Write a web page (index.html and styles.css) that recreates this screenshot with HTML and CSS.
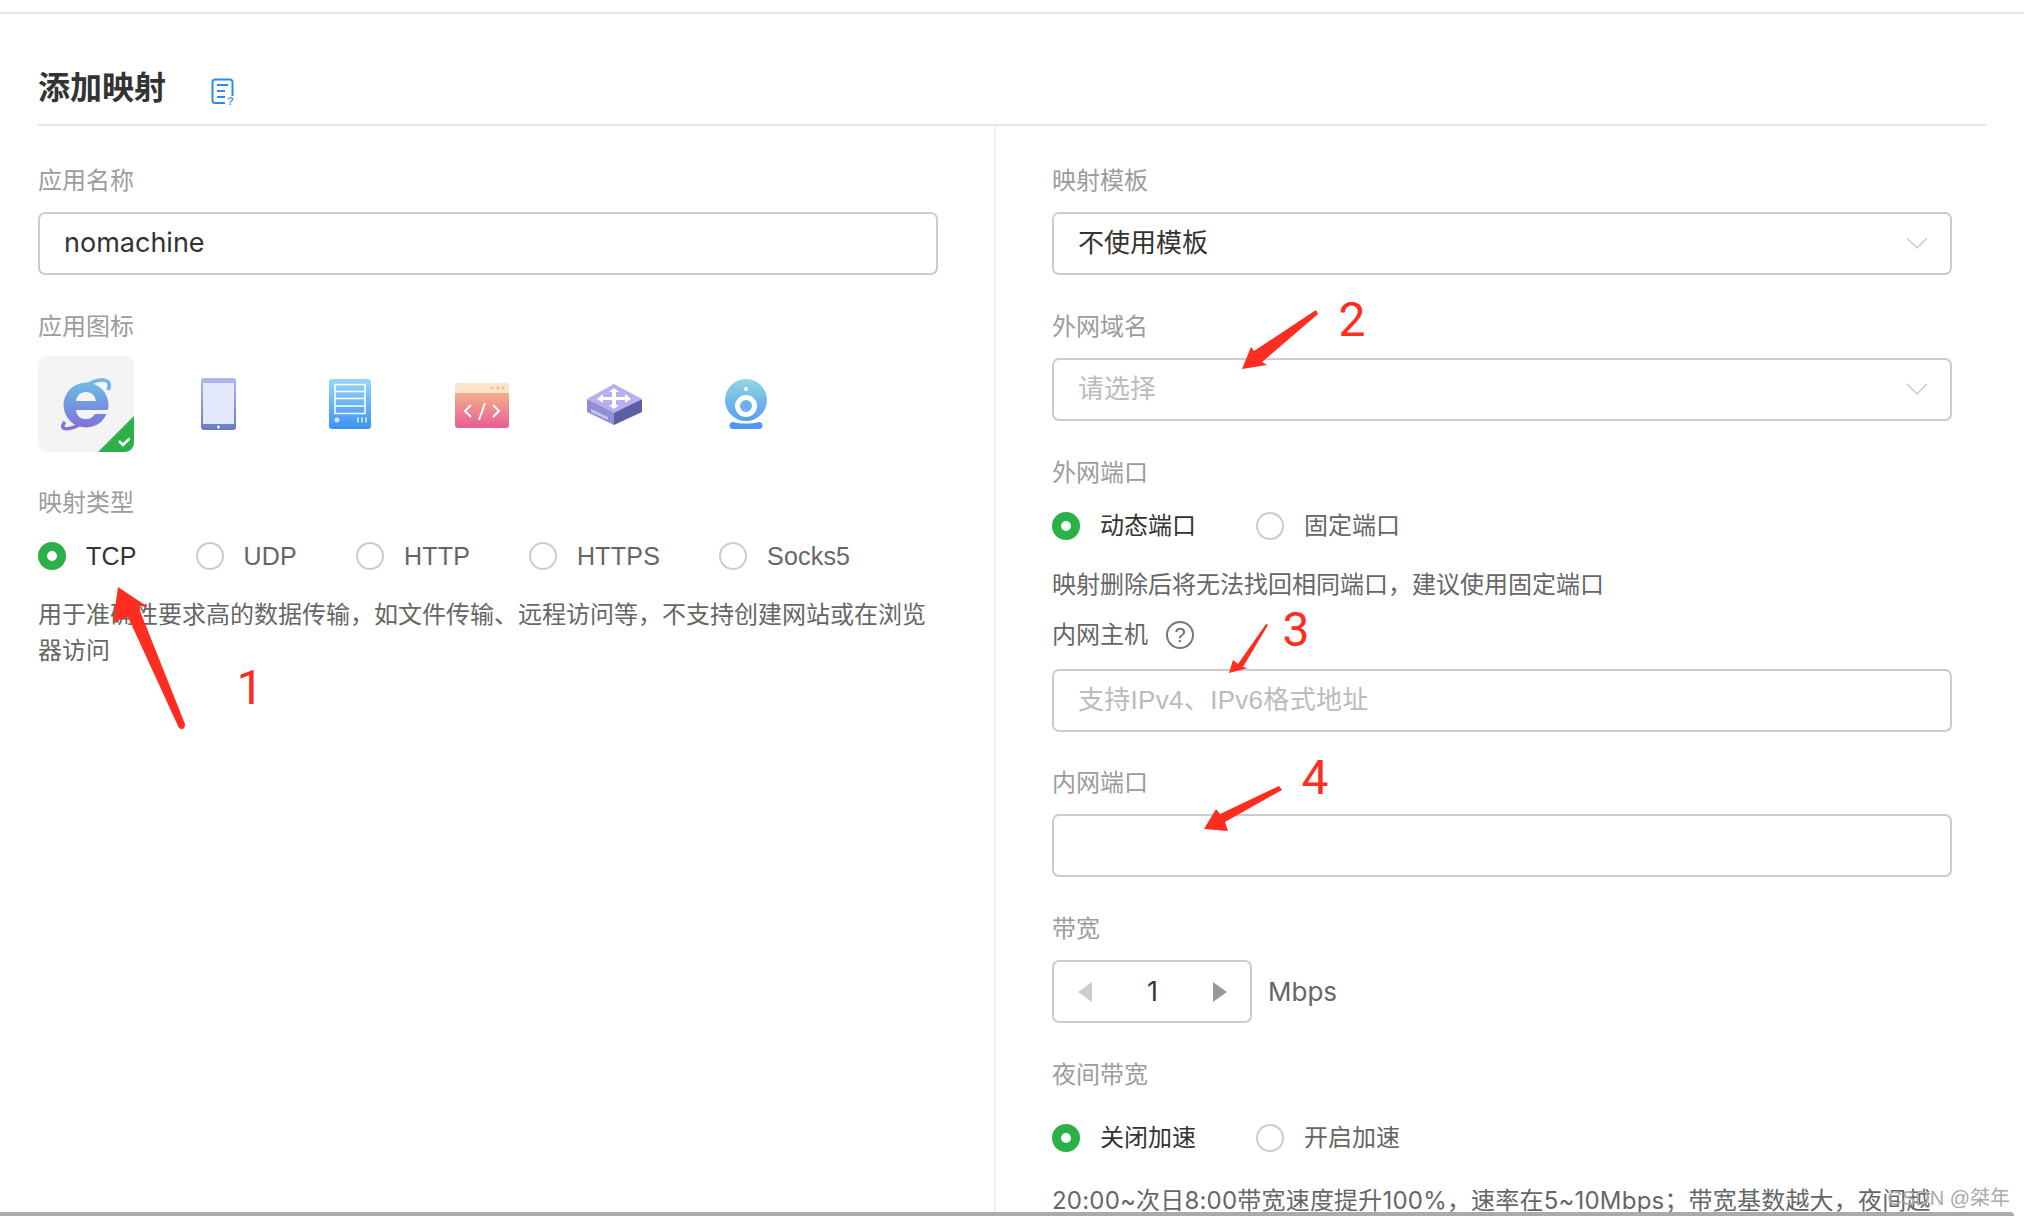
FILE: index.html
```html
<!DOCTYPE html>
<html lang="zh-CN">
<head>
    <meta charset="UTF-8">
    <title>添加映射</title>
    <link rel="stylesheet" href="styles.css">
</head>
<body>
<div id="wrapper">
    <div class="topline"></div>
    <div class="page-head">
        <h1>添加映射</h1>
        <svg class="doc-icon" width="24" height="28" viewBox="0 0 24 28">
            <path d="M14 25H4a2.500 2.500 0 0 1-2.500-2.500V4A2.500 2.500 0 0 1 4 1.500h15A2.500 2.500 0 0 1 21.500 4v14" fill="none" stroke="#2d8ae6" stroke-width="2"/>
            <path d="M6 7h11M6 13h8M6 19h8" fill="none" stroke="#2d8ae6" stroke-width="2"/>
            <text x="16" y="27" class="doc-mark">?</text>
        </svg>
    </div>
    <div class="columns">
        <div class="col col-left">
            <div class="field">
                <label>应用名称</label>
                <div class="control latin">nomachine</div>
            </div>
            <div class="field">
                <label>应用图标</label>
                <div class="icon-row">
                    <div class="icon-cell selected">
                        <svg width="96" height="96" viewBox="0 0 96 96">
                            <defs>
                                <linearGradient id="ie" x1="0" y1="0" x2="0" y2="1">
                                    <stop offset="0" stop-color="#6cbbe6"/>
                                    <stop offset="1" stop-color="#7f72d8"/>
                                </linearGradient>
                            </defs>
                            <path d="M27 66C20 74 30 75 43 68M45 32C60 20 76 22 70 34" fill="none" stroke="url(#ie)" stroke-width="3.500"/>
                            <circle cx="48" cy="49" r="22.500" fill="url(#ie)"/>
                            <path d="M38 45c1-6 5-9 10-9s9 3 10 9z" fill="#f4f4f4"/>
                            <path d="M38 54c1 7 5 9 10 9 4 0 7-2 9-5h14v-4z" fill="#f4f4f4"/>
                            <path d="M60 96 96 60v36z" fill="#2cb04a"/>
                            <path d="M81 85l4 4 6.500-6.500" fill="none" stroke="#fff" stroke-width="2.500"/>
                        </svg>
                    </div>
                    <div class="icon-cell">
                        <svg width="35" height="52" viewBox="0 0 35 52">
                            <defs>
                                <linearGradient id="tablet" x1="0" y1="0" x2="0" y2="1">
                                    <stop offset="0" stop-color="#aeb8ec"/>
                                    <stop offset="1" stop-color="#667cc4"/>
                                </linearGradient>
                            </defs>
                            <rect width="35" height="52" rx="3" fill="url(#tablet)"/>
                            <rect x="2" y="5" width="31" height="41" fill="#e3e8fb"/>
                            <circle cx="17.500" cy="49" r="1.500" fill="#fff"/>
                        </svg>
                    </div>
                    <div class="icon-cell">
                        <svg width="42" height="50" viewBox="0 0 42 50">
                            <defs>
                                <linearGradient id="server" x1="0" y1="0" x2="0" y2="1">
                                    <stop offset="0" stop-color="#9ad6f8"/>
                                    <stop offset="1" stop-color="#3c92f0"/>
                                </linearGradient>
                            </defs>
                            <rect width="42" height="50" rx="3" fill="url(#server)"/>
                            <rect x="6" y="5.500" width="30" height="29" fill="none" stroke="#fff" stroke-width="1.500"/>
                            <path d="M6 12.500h30M6 19.500h30M6 27h30" stroke="#fff" stroke-width="1.500"/>
                            <circle cx="8" cy="41" r="2.500" fill="#cfe6fc"/>
                            <path d="M29 38.500v5M33 38.500v5M37 38.500v5" stroke="#e2f0fd" stroke-width="1.500"/>
                        </svg>
                    </div>
                    <div class="icon-cell">
                        <svg class="nudge" width="54" height="45" viewBox="0 0 54 45">
                            <defs>
                                <linearGradient id="code" x1="0" y1="0" x2="0" y2="1">
                                    <stop offset="0" stop-color="#f6c98c"/>
                                    <stop offset="1" stop-color="#e85c94"/>
                                </linearGradient>
                            </defs>
                            <rect width="54" height="45" rx="3" fill="url(#code)"/>
                            <path d="M0 10V3a3 3 0 0 1 3-3h48a3 3 0 0 1 3 3v7z" fill="#fde4ca"/>
                            <circle cx="37" cy="5" r="1.500" fill="#f3bf8c"/>
                            <circle cx="43" cy="5" r="1.500" fill="#f3bf8c"/>
                            <circle cx="48" cy="5" r="1.500" fill="#f3bf8c"/>
                            <path d="M16 22l-6 6 6 6M38 22l6 6-6 6M30 20l-6 17" fill="none" stroke="#fff" stroke-width="2"/>
                        </svg>
                    </div>
                    <div class="icon-cell">
                        <svg width="55" height="41" viewBox="0 0 55 41">
                            <path d="M0 15v13l27 13V28z" fill="#8d90d4"/>
                            <path d="M55 15v13L27 41V28z" fill="#5a60a4"/>
                            <path d="M4 25l17 8v3L4 28z" fill="#c5c6f2"/>
                            <path d="M27 0l28 15-28 14L0 15z" fill="#b9aeee"/>
                            <path d="M27 4l5 4h-3v5h9v-3l6 5-6 4v-3h-9v5h3l-5 4-5-4h3v-5h-9v3l-6-4 6-5v3h9V8h-3z" fill="#fff"/>
                        </svg>
                    </div>
                    <div class="icon-cell">
                        <svg width="42" height="50" viewBox="0 0 42 50">
                            <defs>
                                <linearGradient id="cam" x1="0" y1="0" x2="0" y2="1">
                                    <stop offset="0" stop-color="#8fd7e0"/>
                                    <stop offset="1" stop-color="#599df1"/>
                                </linearGradient>
                            </defs>
                            <circle cx="21" cy="21" r="21" fill="url(#cam)"/>
                            <circle cx="21" cy="27" r="8.500" fill="#6fb0ee" stroke="#fff" stroke-width="5"/>
                            <circle cx="21" cy="10" r="2" fill="#fff"/>
                            <path d="M8 43c8 2 18 2 26 0a3.500 3.500 0 0 1 0 7H8a3.500 3.500 0 0 1 0-7z" fill="#5598f2"/>
                        </svg>
                    </div>
                </div>
            </div>
            <div class="field-type">
                <label>映射类型</label>
                <div class="radio-row latin-radios">
                    <span class="radio on">TCP</span>
                    <span class="radio">UDP</span>
                    <span class="radio">HTTP</span>
                    <span class="radio">HTTPS</span>
                    <span class="radio">Socks5</span>
                </div>
                <p class="desc">用于准确性要求高的数据传输，如文件传输、远程访问等，不支持创建网站或在浏览器访问</p>
            </div>
        </div>
        <div class="col col-right">
            <div class="field">
                <label>映射模板</label>
                <div class="control select">不使用模板<svg class="chevron" width="22" height="13" viewBox="0 0 22 13"><path d="M1 1l10 10L21 1" fill="none" stroke="#c6cad2" stroke-width="1.500"/></svg></div>
            </div>
            <div class="field">
                <label>外网域名</label>
                <div class="control select empty">请选择<svg class="chevron" width="22" height="13" viewBox="0 0 22 13"><path d="M1 1l10 10L21 1" fill="none" stroke="#c6cad2" stroke-width="1.500"/></svg></div>
            </div>
            <label>外网端口</label>
            <div class="radio-row mt21">
                <span class="radio on">动态端口</span>
                <span class="radio">固定端口</span>
            </div>
            <p class="desc mt27">映射删除后将无法找回相同端口，建议使用固定端口</p>
            <div class="label-help">内网主机<span class="help">?</span></div>
            <div class="control empty spaced mt16">支持IPv4、IPv6格式地址</div>
            <div class="field-next">
                <label>内网端口</label>
                <div class="control"></div>
            </div>
            <div class="field-next bandwidth">
                <label>带宽</label>
                <div class="stepper-row">
                    <div class="stepper">
                        <span class="arrow left"></span>
                        <span class="latin">1</span>
                        <span class="arrow right"></span>
                    </div>
                    <span class="unit">Mbps</span>
                </div>
            </div>
            <label class="night">夜间带宽</label>
            <div class="radio-row mt31">
                <span class="radio on">关闭加速</span>
                <span class="radio">开启加速</span>
            </div>
            <p class="desc mt31 wide-digits">20:00~次日8:00带宽速度提升100%，速率在5~10Mbps；带宽基数越大，夜间越</p>
        </div>
    </div>
    <div class="bottom-bar"></div>
</div>
<div class="watermark">CSDN @桀年</div>
<svg class="marks" width="2024" height="1216" viewBox="0 0 2024 1216">
    <path d="M118 587l30 20-10-1 47 118q0 5-3 5-3 0-4-3l-50-109-15 5z" fill="#fe2d20"/>
    <path d="M1242 369l9-22 3 4 62-41 2 4-56 48 5 3z" fill="#fe2d20"/>
    <path d="M1229 673l4-13 5 4 28-40 2 1-25 42 5 1z" fill="#fe2d20"/>
    <path d="M1204 829l12-20 4 5 59-28 3 4-57 32 3 9z" fill="#fe2d20"/>
    <text x="250" y="704" class="mark-num">1</text>
    <text x="1352" y="336" class="mark-num">2</text>
    <text x="1296" y="646" class="mark-num">3</text>
    <text x="1315" y="794" class="mark-num">4</text>
</svg>
</body>
</html>
```

FILE: styles.css
```css
html, body{
    width:2024px;
    height:1216px;
    margin:0px;
    padding:0px;
    overflow:hidden;
    background:#fff;
}
body{
    position:relative;
    font-family:"Liberation Sans", "Noto Sans CJK SC", sans-serif;
    font-size:24px;
    color:#666;
}
#wrapper{
    display:flex;
    flex-direction:column;
    height:1216px;
}
.topline{
    height:12px;
    border-bottom:2px solid #e6e6e6;
    flex:none;
}
.page-head{
    flex:none;
    box-sizing:border-box;
    display:flex;
    align-items:center;
    height:112px;
    padding-top:42px;
    margin:0px 38px;
    border-bottom:2px solid #e6e6e6;
}
h1{
    margin:0px;
    padding-bottom:4px;
    font-size:32px;
    line-height:40px;
    color:#333;
}
.doc-icon{
    margin-left:45px;
    margin-top:4px;
}
.doc-mark{
    font-size:11px;
    font-weight:bold;
    fill:#4a9bea;
}
.columns{
    flex:1;
    min-height:0;
    display:flex;
    overflow:hidden;
}
.col{
    padding-top:37px;
}
.col-left{
    width:956px;
    margin-left:38px;
    border-right:2px solid #eee;
    flex:none;
}
.col-right{
    width:900px;
    margin-left:56px;
    flex:none;
}
label, .label-help{
    display:block;
    line-height:36px;
    color:#9c9c9c;
}
.field{
    margin-bottom:34px;
}
.field label{
    margin-bottom:13px;
}
.control{
    box-sizing:border-box;
    display:flex;
    align-items:center;
    justify-content:space-between;
    height:63px;
    padding:0px 24px 7px 24px;
    border:2px solid #ccc;
    border-radius:7px;
    color:#333;
    font-size:26px;
}
.col-left .control{
    width:900px;
}
.control.latin{
    padding-bottom:2px;
}
.latin{
    font-family:Inter, "Noto Sans CJK SC", sans-serif;
    font-size:27px;
}
.control.empty{
    color:#bbb;
}
.spaced{
    letter-spacing:0.3px;
}
.chevron{
    margin-right:-2px;
    margin-top:7px;
}
.icon-row{
    display:flex;
    gap:36px;
    margin-top:-2px;
}
.icon-cell{
    width:96px;
    height:96px;
    display:flex;
    align-items:center;
    justify-content:center;
    border-radius:9px;
    overflow:hidden;
}
.nudge{
    margin-top:2px;
}
.selected{
    background:#f4f4f4;
}
.field-type{
    margin-top:-1px;
}
.field-type label{
    margin-bottom:21px;
}
.radio-row{
    display:flex;
    gap:60px;
    line-height:28px;
    height:28px;
}
.latin-radios{
    gap:59px;
    font-size:25px;
    letter-spacing:0.2px;
}
.radio{
    display:flex;
    align-items:center;
}
.radio::before{
    content:"";
    box-sizing:border-box;
    width:28px;
    height:28px;
    margin-right:20px;
    border:2px solid #ccc;
    border-radius:50%;
    flex:none;
}
.radio.on{
    color:#333;
}
.radio.on::before{
    border:9px solid #2cb04a;
    background:#fff;
}
.desc{
    margin:27px 0px 0px 0px;
    line-height:36px;
    color:#666;
}
.col-left .desc{
    width:900px;
}
.mt21{
    margin-top:21px;
}
.mt27{
    margin-top:27px;
}
.mt16{
    margin-top:16px;
}
.mt31{
    margin-top:31px;
}
.label-help{
    display:flex;
    align-items:center;
    margin-top:14px;
    color:#666;
}
.help{
    box-sizing:border-box;
    width:28px;
    height:28px;
    margin-left:18px;
    border:2px solid #777;
    border-radius:50%;
    text-align:center;
    line-height:24px;
    font-size:20px;
}
.field-next{
    margin-top:33px;
}
.field-next label{
    margin-bottom:13px;
}
.bandwidth{
    margin-top:34px;
}
.stepper-row{
    display:flex;
    align-items:center;
    gap:16px;
}
.stepper{
    box-sizing:border-box;
    width:200px;
    height:63px;
    display:flex;
    align-items:center;
    justify-content:space-between;
    padding:0px 23px 0px 24px;
    border:2px solid #ccc;
    border-radius:7px;
    color:#333;
}
.arrow{
    width:0px;
    height:0px;
    border-top:10px solid transparent;
    border-bottom:10px solid transparent;
}
.arrow.left{
    border-right:14px solid #ccc;
}
.arrow.right{
    border-left:14px solid #999;
}
.unit{
    font-family:Inter, sans-serif;
    font-size:26px;
    color:#666;
}
.night{
    margin-top:34px;
}
.wide-digits{
    font-family:Inter, "Noto Sans CJK SC", sans-serif;
    letter-spacing:0.2px;
    white-space:nowrap;
}
.bottom-bar{
    flex:none;
    height:4px;
    margin-right:10px;
    background:#aaa;
    border-top-right-radius:5px;
}
.watermark{
    position:absolute;
    right:14px;
    bottom:5px;
    font-size:20px;
    line-height:26px;
    color:#aaa;
}
.marks{
    position:absolute;
    top:0px;
    left:0px;
}
.mark-num{
    font-family:Roboto, sans-serif;
    font-weight:400;
    font-size:48px;
    text-anchor:middle;
    fill:#fe2d20;
}
```
